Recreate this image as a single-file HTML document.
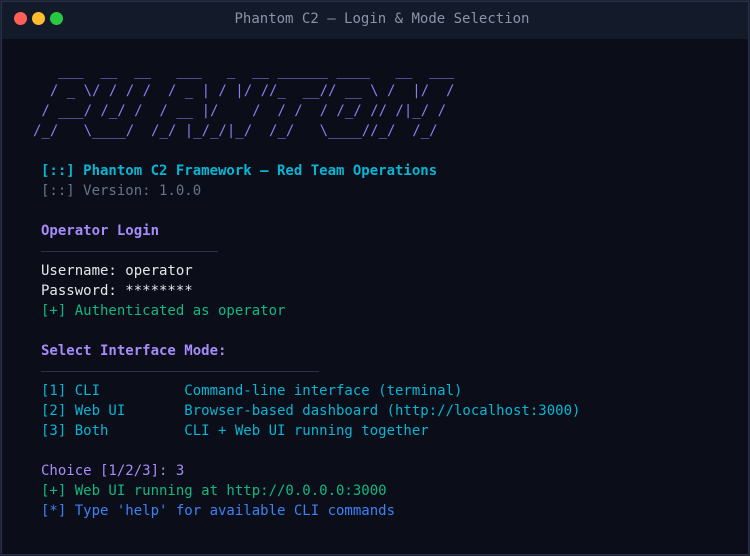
<!DOCTYPE html>
<html><head><meta charset="utf-8"><style>
*{margin:0;padding:0;box-sizing:border-box}
html,body{width:750px;height:556px;background:#1e2337;overflow:hidden}
.win{position:absolute;left:1px;top:1px;width:748px;height:554px;background:#0b0e18;border:1px solid #2a3048;overflow:hidden}
.bar{height:37px;background:#131a29;position:relative}
.dot{position:absolute;top:10px;width:13px;height:13px;border-radius:50%}
.t{position:absolute;left:14px;right:0;top:9px;text-align:center;color:#8b93a7;font:14px "DejaVu Sans Mono","Liberation Mono",monospace}
pre,.l{font:14px/20px "DejaVu Sans Mono","Liberation Mono",monospace;white-space:pre}
pre.art{position:absolute;left:31px;top:59px;color:#8b7cf0}
.c{position:absolute;left:39px;top:159px}
.cy{color:#06b6d4}.gr{color:#64748b}.pu{color:#a78bfa}.wh{color:#e5e7eb}.g{color:#10b981}.bl{color:#3b82f6}
.b{font-weight:bold}
.rule{height:20px;position:relative}
.rule::after{content:"";position:absolute;left:0;top:10px;height:1px;background:#2c3249}
.r1::after{width:177px}.r2::after{width:278px}
</style></head><body><div class="win">
<div class="bar"><div class="dot" style="left:12px;background:#ff5f57"></div><div class="dot" style="left:30px;background:#febc2e"></div><div class="dot" style="left:48px;background:#28c840"></div><div class="t">Phantom C2 — Login &amp; Mode Selection</div></div>
<pre class="art">   ___  __  __   ___   _  __ ______ ____   __  ___
  / _ \/ / / /  / _ | / |/ //_  __// __ \ /  |/  /
 / ___/ /_/ /  / __ |/    /  / /  / /_/ // /|_/ /
/_/   \____/  /_/ |_/_/|_/  /_/   \____//_/  /_/</pre>
<div class="c">
<div class="l cy b">[::] Phantom C2 Framework — Red Team Operations</div>
<div class="l gr">[::] Version: 1.0.0</div>
<div class="l"> </div>
<div class="l pu b">Operator Login</div>
<div class="rule r1"></div>
<div class="l wh">Username: operator</div>
<div class="l wh">Password: ********</div>
<div class="l g">[+] Authenticated as operator</div>
<div class="l"> </div>
<div class="l pu b">Select Interface Mode:</div>
<div class="rule r2"></div>
<div class="l cy">[1] CLI          Command-line interface (terminal)</div>
<div class="l cy">[2] Web UI       Browser-based dashboard (http://localhost:3000)</div>
<div class="l cy">[3] Both         CLI + Web UI running together</div>
<div class="l"> </div>
<div class="l pu">Choice [1/2/3]: 3</div>
<div class="l g">[+] Web UI running at http://0.0.0.0:3000</div>
<div class="l bl">[*] Type 'help' for available CLI commands</div>
</div>
</div></body></html>
